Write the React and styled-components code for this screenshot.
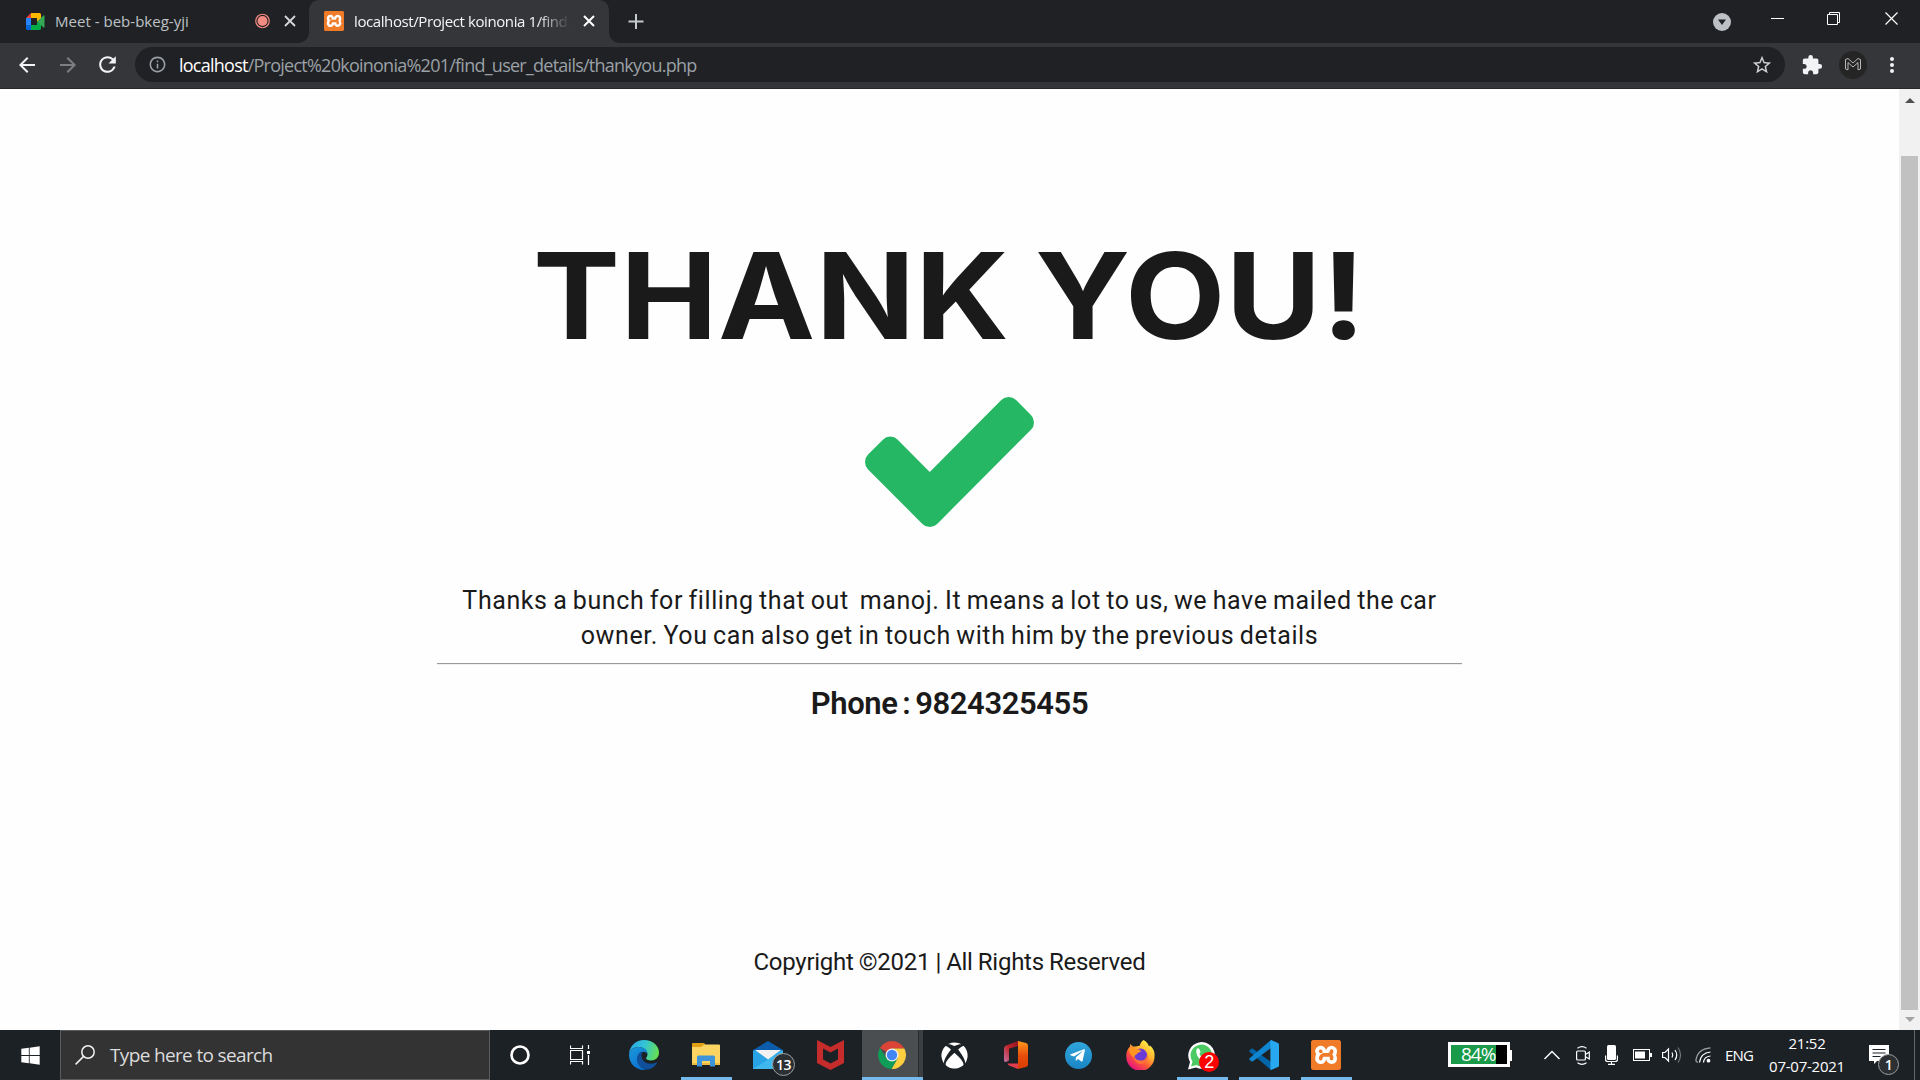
import React from "react";
import styled, { createGlobalStyle } from "styled-components";
import { FaWindows, FaXbox, FaTelegramPlane } from "react-icons/fa";
import { MdExtension, MdStarBorder, MdArrowBack, MdArrowForward, MdRefresh, MdInfoOutline } from "react-icons/md";
import { SiXampp } from "react-icons/si";

const Global = createGlobalStyle`
  * { box-sizing: border-box; }
  html, body { margin: 0; padding: 0; overflow: hidden; }
  svg { display: block; flex: none; }
`;

const uiFont = `"Open Sans", "Noto Sans", sans-serif`;

const Screen = styled.div`
  width: 1920px;
  height: 1080px;
  display: flex;
  flex-direction: column;
  overflow: hidden;
  font-family: ${uiFont};
  white-space: pre;
`;

/* ---------- browser chrome ---------- */

const TabStrip = styled.header`
  height: 43px;
  display: flex;
  background: #202124;
`;

const Tab = styled.div`
  position: relative;
  width: ${(p) => p.$width}px;
  height: 43px;
  display: flex;
  align-items: center;
  padding-left: ${(p) => p.$pad}px;
  padding-bottom: 1px;
  border-radius: 10px 10px 0 0;
  background: ${(p) => (p.$active ? "#35363a" : "transparent")};
  color: ${(p) => (p.$active ? "#f4f5f6" : "#bdc1c6")};
`;

const TabFoot = styled.i`
  position: absolute;
  bottom: 0;
  ${(p) => p.$side}: -10px;
  width: 10px;
  height: 10px;
  background: radial-gradient(circle at ${(p) => (p.$side === "left" ? "0 0" : "100% 0")}, transparent 9.5px, #35363a 10px);
`;

const TabTitle = styled.span`
  width: ${(p) => p.$width}px;
  margin-left: ${(p) => p.$gap}px;
  padding-bottom: 1px;
  font-size: 15px;
  line-height: 20px;
  letter-spacing: ${(p) => p.$spacing}px;
  overflow: hidden;
  mask-image: ${(p) => (p.$fade ? "linear-gradient(90deg, #000 85%, transparent 100%)" : "none")};
`;

const Space = styled.span`
  flex: none;
  width: ${(p) => p.$w}px;
`;

const WindowControls = styled.div`
  margin-left: auto;
  display: flex;
  padding-top: 12px;
`;

const Toolbar = styled.nav`
  height: 46px;
  display: flex;
  align-items: center;
  padding: 0 18px 2px 15px;
  background: #35363a;
  border-bottom: 1px solid #27282b;
  color: #f1f3f4;
`;

const AddressBar = styled.div`
  width: 1650px;
  height: 35px;
  margin-left: 15px;
  padding: 0 12px 0 13px;
  display: flex;
  align-items: center;
  border-radius: 18px;
  background: #202124;
  color: #9aa0a6;
`;

const Url = styled.span`
  margin-left: 12px;
  font-size: 18px;
  line-height: 24px;
  letter-spacing: -0.75px;
  flex: 1;
`;

const Host = styled.span`
  color: #ffffff;
`;

const Avatar = styled.div`
  width: 28px;
  height: 28px;
  margin-left: 16px;
  border-radius: 50%;
  background: #252525;
  display: grid;
  place-items: center;
`;

/* ---------- page ---------- */

const Viewport = styled.div`
  height: 941px;
  display: flex;
  background: #fefefe;
`;

const Page = styled.main`
  width: 1899px;
  display: flex;
  flex-direction: column;
  align-items: center;
  color: #1a1a1a;
  font-family: Roboto, "Open Sans", sans-serif;
`;

const Title = styled.h1`
  margin: 133px 0 0;
  height: 148px;
  font: 700 120px/148px Inter, sans-serif;
  letter-spacing: 0.3px;
  word-spacing: -5px;
  transform: scaleX(1.086);
`;

const CheckMark = styled.svg`
  width: 169px;
  height: 130px;
  margin-top: 27px;
  fill: #26b764;
`;

const Message = styled.div`
  width: 1025px;
  height: 137px;
  padding-top: 56px;
  display: flex;
  flex-direction: column;
  align-items: center;
  border-bottom: 1px solid #9a9a9a;
  box-shadow: 0 1px #eeeeee;
`;

const Line = styled.p`
  margin: 0;
  font-size: 25px;
  line-height: 35px;
  letter-spacing: 0.6px;
  word-spacing: -1.3px;
`;

const Phone = styled.h2`
  margin: 21px 0 0;
  font-size: 31px;
  font-weight: 600;
  line-height: 38px;
  letter-spacing: -0.4px;
  word-spacing: -2.5px;
`;

const Copyright = styled.footer`
  margin-top: 223px;
  font-size: 24px;
  line-height: 32px;
  letter-spacing: -0.27px;
  word-spacing: -0.5px;
`;

const ScrollTrack = styled.div`
  width: 21px;
  display: flex;
  flex-direction: column;
  align-items: center;
  background: #f1f1f1;
`;

const ScrollThumb = styled.div`
  width: 17px;
  height: 854px;
  background: #c1c1c1;
`;

const ScrollArrow = styled.div`
  height: ${(p) => p.$height}px;
  padding-top: ${(p) => p.$top}px;
`;

/* ---------- taskbar ---------- */

const Taskbar = styled.footer`
  height: 50px;
  display: flex;
  background: #1c2126;
  color: #ffffff;
`;

const Slot = styled.div`
  position: relative;
  width: ${(p) => p.$width || 62}px;
  height: 50px;
  display: grid;
  place-items: center;
  &::after {
    content: "";
    position: absolute;
    left: 6px;
    bottom: 0;
    width: 51px;
    height: 3px;
    background: ${(p) => (p.$running ? "#76b9ed" : "transparent")};
  }
`;

const ActiveSlot = styled(Slot)`
  margin-left: 1px;
  background: linear-gradient(90deg, #4a4e51 56px, #272b2e 56px, #272b2e 57px, #3b3f42 57px);
  padding-right: 2px;
  &::after { left: 0; width: 61px; }
`;

const SearchBox = styled.div`
  width: 430px;
  height: 50px;
  padding-left: 14px;
  display: flex;
  align-items: center;
  background: #333333;
  border: 1px solid #5b5c5d;
  color: #dcdcdc;
  font-size: 19px;
  letter-spacing: -0.65px;
`;

const SearchText = styled.span`
  margin-left: 15px;
`;

const Badge = styled.span`
  position: absolute;
  left: ${(p) => p.$x}px;
  top: ${(p) => p.$y}px;
  width: ${(p) => p.$size}px;
  height: ${(p) => p.$size}px;
  display: grid;
  place-items: center;
  border-radius: 50%;
  border: ${(p) => (p.$red ? "0" : "1px solid #9c9fa0")};
  background: ${(p) => (p.$red ? "#fd0000" : "#2d3033")};
  font-family: ${(p) => (p.$red ? `"Liberation Sans", sans-serif` : uiFont)};
  font-size: ${(p) => p.$font}px;
  font-weight: ${(p) => (p.$red ? 400 : 600)};
  line-height: 1;
  letter-spacing: -0.5px;
`;

const Tray = styled.div`
  margin-left: 91px;
  flex: 1;
  display: flex;
  align-items: center;
`;

const Battery = styled.div`
  width: 62px;
  height: 25px;
  margin-bottom: 1px;
  border: 3px solid #ffffff;
  display: flex;
  align-items: center;
  padding-left: 10px;
  background: linear-gradient(90deg, #189a48 45px, #000000 45px);
  font-size: 19px;
  letter-spacing: -1px;
  line-height: 19px;
`;

const BatteryTip = styled.div`
  width: 2px;
  height: 11px;
  background: #ffffff;
`;

const Language = styled.span`
  width: 28px;
  margin: 0 1px 0 14px;
  font-size: 15px;
  letter-spacing: -0.8px;
`;

const Clock = styled.div`
  width: 80px;
  height: 50px;
  margin-left: 13px;
  padding-top: 2px;
  display: flex;
  flex-direction: column;
  align-items: center;
  font-size: 15px;
  line-height: 23px;
  letter-spacing: -0.25px;
`;

const Notifications = styled.div`
  position: relative;
  width: 44px;
  height: 50px;
  padding: 15px 0 0 22px;
`;

const DesktopEdge = styled.div`
  width: 1px;
  height: 50px;
  margin-left: 23px;
  background: #64686b;
`;

/* ---------- drawings ---------- */

const Cross = ({ size, color, stroke }) => (
  <svg width={size} height={size} viewBox="0 0 12 12" stroke={color} strokeWidth={stroke}>
    <path d="M1 1 11 11M11 1 1 11" />
  </svg>
);

const MeetIcon = () => (
  <svg width="19" height="17" viewBox="0 0 19 17">
    <path d="M0 5 5 0v5z" fill="#ea4335" />
    <path d="M0 5h5v7H0z" fill="#2684fc" />
    <path d="M0 12h5v5H1.500q-1.500 0-1.500-1.500z" fill="#0066da" />
    <path d="M5 0h8.500Q15 0 15 1.500V6l-4 3V5H5z" fill="#ffba00" />
    <path d="M5 12h6V9l4 2v4.500q0 1.500-1.500 1.500H5z" fill="#00ac47" />
    <path d="M11 8.500 17.500 2.500q1-.6 1 .5v11q0 1.100-1 .5z" fill="#34a853" />
  </svg>
);

const XamppTile = styled.div`
  width: ${(p) => p.$size}px;
  height: ${(p) => p.$size}px;
  display: grid;
  place-items: center;
  border-radius: ${(p) => p.$size / 12}px;
  background: linear-gradient(#ffffff, #ffffff) center / 80% 80% no-repeat #d66a20;
  color: #f07b29;
`;

const XamppIcon = ({ size }) => (
  <XamppTile $size={size}>
    <SiXampp size={size} />
  </XamppTile>
);

const EdgeIcon = () => (
  <svg width="30" height="30" viewBox="0 0 30 30">
    <defs>
      <linearGradient id="edgeTop" x1="0" y1=".3" x2="1" y2=".5">
        <stop offset="0" stopColor="#2aa7e8" /><stop offset=".5" stopColor="#33c5d4" /><stop offset="1" stopColor="#66e04f" />
      </linearGradient>
      <linearGradient id="edgeLeft" x1="0" y1="0" x2=".6" y2="1">
        <stop offset="0" stopColor="#1c9bdc" /><stop offset="1" stopColor="#0a6fd0" />
      </linearGradient>
    </defs>
    <path d="M0 14C.5 6 7 0 15 0c9 0 15 6 15 12.500 0 5-3.500 8-8 8-3 0-5-1-5-2.200 0-.8 1.500-1.500 1.500-4C18.500 10 14 7 9.500 7 5 7 1.500 9.500 0 14z" fill="url(#edgeTop)" />
    <path d="M0 14.500C1 10 5 7 9.500 7c5 0 9 3 9 7-1-1.500-2.500-2.200-4-2.200-4 0-6 3.500-6 7.200 0 5 4 9.500 8.500 10.800C8 31 0 24.500 0 14.500z" fill="url(#edgeLeft)" />
    <path d="M14 11.800c-4 .5-6 3.800-6 7.200 0 5.500 4.500 10 9.500 10.800 4.500-.5 8.500-3 10.500-6.800.3-.6-.2-.9-.7-.6C20 26 12.500 22 12.500 15.500c0-1.800.5-2.900 1.500-3.700z" fill="#104f99" />
  </svg>
);

const ExplorerIcon = () => (
  <svg width="28" height="24" viewBox="0 0 28 24">
    <path d="M0 1q0-1 1-1h11l2 2.500h-3L9 5H0z" fill="#e2a112" />
    <path d="M0 4h9l3-2.500h15q1 0 1 1V22H0z" fill="#fcd462" />
    <path d="M0 20h28v2H0z" fill="#eebc3c" />
    <path d="M5 23.500V14q0-1.500 1.500-1.500h15Q23 12.500 23 14v9.500h-5V18h-8v5.500z" fill="#3d94d9" />
  </svg>
);

const MailIcon = () => (
  <svg width="30" height="28" viewBox="0 0 30 28">
    <path d="M0 9 15 0l15 9v2H0z" fill="#0b5cab" />
    <path d="M0 9.500h30V28H0z" fill="#27a3e6" />
    <path d="M0 28 17 17.500 30 9.500V28z" fill="#3fb8ee" />
    <path d="M2 9h26L15 18.500z" fill="#f1f1f1" />
  </svg>
);

const McAfeeIcon = () => (
  <svg width="27" height="30" viewBox="0 0 27 30">
    <path d="M0 0 13.500 7 27 0v23l-13.500 7L0 23zM6 8.500V19.500l7.500 4 7.500-4V8.500l-7.500 4z" fill="#c72c2c" fillRule="evenodd" />
  </svg>
);

const ChromeIcon = () => (
  <svg width="28" height="28" viewBox="0 0 28 28">
    <path d="M14 14 1.900 7A14 14 0 0 1 26.100 7L26.300 7.500H14z" fill="#db4437" />
    <path d="M14 7.500h12.400A14 14 0 0 1 13.500 28L19.600 17.200z" fill="#ffcd40" />
    <path d="M1.900 7A14 14 0 0 0 13.500 28l6.100-10.800L8.400 17.200z" fill="#0f9d58" />
    <circle cx="14" cy="14" r="6.500" fill="#f1f1f1" />
    <circle cx="14" cy="14" r="5.200" fill="#4285f4" />
  </svg>
);

const OfficeIcon = () => (
  <svg width="24" height="28" viewBox="0 0 24 28">
    <defs>
      <linearGradient id="officeL" x1="1" y1="0" x2="0" y2="1">
        <stop offset="0" stopColor="#8c1220" /><stop offset=".5" stopColor="#c3262c" /><stop offset="1" stopColor="#c576a8" />
      </linearGradient>
      <linearGradient id="officeR" x1="0" y1="0" x2="0" y2="1">
        <stop offset="0" stopColor="#ff9a1e" /><stop offset=".5" stopColor="#e8500c" /><stop offset="1" stopColor="#d83b01" />
      </linearGradient>
    </defs>
    <path d="M14 0 2 4.500Q0 5.300 0 7.500V19q0 2.500 2 2l3-1.500V8.500q0-1 1-1.300L14 5z" fill="url(#officeL)" />
    <path d="M3.500 22.500h10.500V28L4.500 24.300z" fill="#e23b4b" />
    <path d="M14 0 22 2q2 .5 2 2.500v19q0 2-2 2.500l-8 2z" fill="url(#officeR)" />
  </svg>
);

const TelegramDisc = styled.div`
  width: 27px;
  height: 27px;
  border-radius: 50%;
  display: grid;
  place-items: center;
  padding: 1px 2px 0 0;
  background: linear-gradient(#30a5dc, #1a86c4);
`;

const FirefoxIcon = () => (
  <svg width="29" height="30" viewBox="0 0 29 30">
    <defs>
      <linearGradient id="fox" x1=".85" y1=".1" x2=".25" y2=".95">
        <stop offset="0" stopColor="#fff14a" /><stop offset=".35" stopColor="#ffb52e" /><stop offset=".65" stopColor="#ff5a36" /><stop offset="1" stopColor="#e5127f" />
      </linearGradient>
    </defs>
    <path d="M17.500 0c3 1.500 5 4 5.500 6.500L24 5.500c3.500 3 5 6.500 4.500 11A14 14 0 0 1 .3 17C0 12.500 1.500 9 4 6.500V4l3 2.500h3L14 5.500C14 3.500 15.500 1.500 17.500 0z" fill="url(#fox)" />
    <circle cx="14.500" cy="15" r="6.500" fill="#6a3bd6" />
    <path d="M3 8.500c3-1 5-.5 7 1 2-.5 4 0 5 1.500-1 1.500-3.500 1.500-4.500 3.500-1.500.5-2.500 1.500-2 3.500C5 16 3 12 3 8.500z" fill="#ff9622" />
    <path d="M8 16c1 3.500 4.500 5 8 4.500 4-.6 6-4 5-8 2.500 6-1 11.500-6.500 11.500C10.500 24 7.500 20 8 16z" fill="#ff7139" />
  </svg>
);

const WhatsappIcon = () => (
  <svg width="28" height="29" viewBox="0 0 28 29">
    <path d="M0 28.500 2 21A13.300 13.300 0 1 1 8 26.500z" fill="#ffffff" />
    <path d="M3 25.500 4.500 20.500A10.800 10.800 0 1 1 8.500 24z" fill="#4bc963" />
    <path d="M8.500 8.500q1.500-2 2.800-.5l1.200 2.800q.2.700-1.200 2.200 1.700 3.200 5 4.500 1.500-2 2.200-1.700l3 1.500q.3 3.400-3.800 3.700C12.500 20.500 7 14 8.500 8.500z" fill="#ffffff" />
  </svg>
);

const VSCodeIcon = () => (
  <svg width="30" height="30" viewBox="0 0 30 30">
    <path d="M.6 10.200 2.300 8.700q.8-.6 1.600 0L22 22v8L.6 11.700q-.8-.8 0-1.500z" fill="#0065a9" />
    <path d="M.6 19.800 2.300 21.300q.8.600 1.600 0L22 8V0L.6 18.300q-.8.800 0 1.500z" fill="#0f86cf" />
    <path d="M22 0 29 3q1 .5 1 1.500v21q0 1-1 1.500l-7 3q-.6-.4-.6-1V1q0-.6.600-1z" fill="#29a8f2" />
  </svg>
);

const CameraIcon = () => (
  <svg width="14" height="19" viewBox="0 0 14 19" fill="none" stroke="#ffffff" strokeWidth="1.200">
    <rect x=".6" y="5" width="8.800" height="9" rx="1" />
    <path d="M9.500 8.500 13.300 6v7L9.500 10.700M1.500 2.200Q6 -.8 10.500 2.200M1.500 16.800q4.500 3 9 0" />
  </svg>
);

const MicIcon = () => (
  <svg width="13" height="20" viewBox="0 0 13 20">
    <rect x="2" y="0" width="9" height="15" rx="1.500" fill="#ffffff" />
    <path d="M.6 10.500v4q0 2 2 2h7.800q2 0 2-2v-4M6.500 16.500V19M3 19.400h7" fill="none" stroke="#ffffff" strokeWidth="1.200" />
  </svg>
);

const PowerIcon = () => (
  <svg width="19" height="12" viewBox="0 0 19 12">
    <rect x=".5" y=".5" width="16" height="11" fill="none" stroke="#ffffff" />
    <path d="M2 2.500h10v7H2zM17 4h2v4h-2z" fill="#ffffff" />
  </svg>
);

const SpeakerIcon = () => (
  <svg width="20" height="18" viewBox="0 0 20 18" fill="none" stroke="#ffffff" strokeWidth="1.200">
    <path d="M.6 6.500H3L6.500 3v12L3 11.500H.6zM10 6.500q1.500 2.500 0 5M13 4q3.500 5 0 10" />
    <path d="M16 1.500q5 7.500 0 15" stroke="#73777a" />
  </svg>
);

const WifiIcon = () => (
  <svg width="16" height="16" viewBox="0 0 16 16" fill="none" stroke="#ffffff" strokeWidth="1.200">
    <path d="M4.500 15.500Q5.500 6 15.500 5M8.500 15.500q.5-6 7-6.500" />
    <path d="M.8 14Q2 2 15.500.8M.8 14l2 1.500" stroke="#a2a5a7" />
    <circle cx="13.500" cy="13.700" r="1.300" fill="#ffffff" />
  </svg>
);

/* ---------- app ---------- */

export default function App() {
  return (
    <Screen>
      <Global />
      <TabStrip>
        <Tab $width={309} $pad={26}>
          <MeetIcon />
          <TabTitle $width={190} $gap={10} $spacing={0.02}>Meet - beb-bkeg-yji</TabTitle>
          <Space $w={10} />
          <svg width="15" height="16" viewBox="0 0 16 16">
            <circle cx="8" cy="8" r="7.200" fill="none" stroke="#f28b82" strokeWidth="1.300" />
            <circle cx="8" cy="8" r="5.300" fill="#f28b82" />
          </svg>
          <Space $w={14} />
          <Cross size={12} color="#d5d7da" stroke={1.8} />
        </Tab>
        <Tab $active $width={300} $pad={15}>
          <TabFoot $side="left" />
          <XamppIcon size={20} />
          <TabTitle $fade $width={216} $gap={10} $spacing={-0.4}>localhost/Project koinonia 1/find_</TabTitle>
          <Space $w={13} />
          <Cross size={12} color="#ffffff" stroke={2} />
          <TabFoot $side="right" />
        </Tab>
        <Space $w={19} />
        <svg width="16" height="43" viewBox="0 0 16 43">
          <path d="M8 14v15M.5 21.500h15" stroke="#c7cacd" strokeWidth="2" />
        </svg>
        <WindowControls>
          <svg width="18" height="20" viewBox="0 0 18 20">
            <circle cx="9" cy="10" r="9" fill="#bdc1c6" />
            <path d="M5 7.500h8l-4 5.500z" fill="#202124" />
          </svg>
          <Space $w={40} />
          <svg width="13" height="13"><path d="M0 6.500h13" stroke="#ffffff" /></svg>
          <Space $w={43} />
          <svg width="13" height="13" fill="none" stroke="#ffffff">
            <path d="M.5 2.500h10v10H.5zM2.500 2.500v-2h10v10h-2" />
          </svg>
          <Space $w={45} />
          <svg width="13" height="13"><path d="M.5.5l12 12M12.500.5l-12 12" stroke="#ffffff" strokeWidth="1.200" /></svg>
          <Space $w={22} />
        </WindowControls>
      </TabStrip>

      <Toolbar>
        <MdArrowBack size={24} />
        <Space $w={17} />
        <MdArrowForward size={24} color="#7c7e81" />
        <Space $w={15} />
        <MdRefresh size={25} />
        <AddressBar>
          <MdInfoOutline size={19} />
          <Url><Host>localhost</Host>/Project%20koinonia%201/find_user_details/thankyou.php</Url>
          <MdStarBorder size={22} color="#d0d2d5" />
        </AddressBar>
        <Space $w={16} />
        <MdExtension size={22} />
        <Avatar>
          <svg width="16" height="13" viewBox="0 0 16 13" fill="none" stroke="#b9b9b9">
            <path d="M.5 1.500 3 .5 8 5l5-4.500 2.500 1V11l-2.500.8V4.500L8 9 3 4.500v7.300L.5 11z" />
          </svg>
        </Avatar>
        <Space $w={23} />
        <svg width="4" height="18" viewBox="0 0 4 18" fill="#f1f3f4">
          <circle cx="2" cy="3" r="2" /><circle cx="2" cy="9" r="2" /><circle cx="2" cy="15" r="2" />
        </svg>
      </Toolbar>

      <Viewport>
        <Page>
          <Title>THANK YOU!</Title>
          <CheckMark viewBox="121 334 1550 1188" preserveAspectRatio="none">
            <path d="M1671 566q0 40-28 68l-724 724-136 136q-28 28-68 28t-68-28l-136-136-362-362q-28-28-28-68t28-68l136-136q28-28 68-28t68 28l294 295 656-657q28-28 68-28t68 28l136 136q28 28 28 68z" />
          </CheckMark>
          <Message>
            <Line>{"Thanks a bunch for filling that out\u00a0 manoj. It means a lot to us, we have mailed the car"}</Line>
            <Line>owner. You can also get in touch with him by the previous details</Line>
          </Message>
          <Phone>Phone : 9824325455</Phone>
          <Copyright>Copyright ©2021 | All Rights Reserved</Copyright>
        </Page>
        <ScrollTrack>
          <ScrollArrow $height={67} $top={9}>
            <svg width="10" height="5"><path d="M0 5 5 0l5 5z" fill="#505050" /></svg>
          </ScrollArrow>
          <ScrollThumb />
          <ScrollArrow $height={20} $top={7}>
            <svg width="10" height="5"><path d="M0 0l5 5 5-5z" fill="#a3a3a3" /></svg>
          </ScrollArrow>
        </ScrollTrack>
      </Viewport>

      <Taskbar>
        <Slot $width={60}>
          <FaWindows size={21} />
        </Slot>
        <SearchBox>
          <svg width="20" height="20" viewBox="0 0 20 20" fill="none" stroke="#f2f2f2" strokeWidth="1.500">
            <circle cx="13" cy="7" r="6.200" /><path d="M8.600 11.400.6 19.400" />
          </svg>
          <SearchText>Type here to search</SearchText>
        </SearchBox>
        <Slot $width={60}>
          <svg width="20" height="20"><circle cx="10" cy="10" r="8.500" fill="none" stroke="#ffffff" strokeWidth="2.600" /></svg>
        </Slot>
        <Slot $width={60}>
          <svg width="20" height="20" viewBox="0 0 20 20" fill="none" stroke="#ffffff" strokeWidth="1.200">
            <path d="M.5.500v3h12v-3M.5 5.500h12v9H.5zM.5 19.500v-3h12v3M18.500 0v4M18.500 10v10" />
            <path d="M17 6h3v3h-3z" fill="#ffffff" stroke="none" />
          </svg>
        </Slot>
        <Space $w={3} />
        <Slot><EdgeIcon /></Slot>
        <Slot $running><ExplorerIcon /></Slot>
        <Slot>
          <MailIcon />
          <Badge $x={35} $y={23} $size={23} $font={14}>13</Badge>
        </Slot>
        <Slot><McAfeeIcon /></Slot>
        <ActiveSlot $running $width={61}><ChromeIcon /></ActiveSlot>
        <Slot $width={62}><FaXbox size={27} /></Slot>
        <Slot><OfficeIcon /></Slot>
        <Slot>
          <TelegramDisc><FaTelegramPlane size={17} /></TelegramDisc>
        </Slot>
        <Slot><FirefoxIcon /></Slot>
        <Slot $running>
          <WhatsappIcon />
          <Badge $red $x={28} $y={22} $size={20} $font={18}>2</Badge>
        </Slot>
        <Slot $running><VSCodeIcon /></Slot>
        <Slot $running><XamppIcon size={30} /></Slot>
        <Tray>
          <Battery>84%</Battery>
          <BatteryTip />
          <Space $w={32} />
          <svg width="16" height="10" viewBox="0 0 16 10"><path d="M.5 9 8 1.500 15.500 9" fill="none" stroke="#ffffff" strokeWidth="1.400" /></svg>
          <Space $w={16} />
          <CameraIcon />
          <Space $w={15} />
          <MicIcon />
          <Space $w={15} />
          <PowerIcon />
          <Space $w={10} />
          <SpeakerIcon />
          <Space $w={13} />
          <WifiIcon />
          <Language>ENG</Language>
          <Clock>
            <span>21:52</span>
            <span>07-07-2021</span>
          </Clock>
          <Notifications>
            <svg width="20" height="19" viewBox="0 0 20 19">
              <path d="M0 0h20v16H8l-3 3v-3H0z" fill="#ffffff" />
              <path d="M3.500 4.500h13M3.500 8h13M3.500 11.500h8" stroke="#1c2126" strokeWidth="1.200" />
            </svg>
            <Badge $x={31} $y={24} $size={21} $font={14}>1</Badge>
          </Notifications>
          <DesktopEdge />
        </Tray>
      </Taskbar>
    </Screen>
  );
}
